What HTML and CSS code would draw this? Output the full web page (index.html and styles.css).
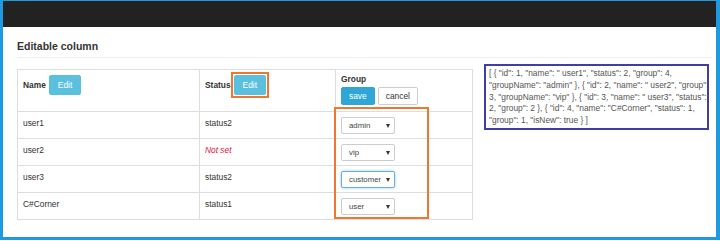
FILE: index.html
```html
<!DOCTYPE html>
<html>
<head>
<meta charset="utf-8">
<link rel="stylesheet" href="styles.css">
</head>
<body>
<div class="frame">
  <div class="navbar"></div>
  <div class="container">
    <h4 class="page-title">Editable column</h4>
    <div class="content-row">
      <div class="table-wrap">
        <table class="grid">
          <colgroup>
            <col class="c-name">
            <col class="c-status">
            <col class="c-group">
          </colgroup>
          <thead>
            <tr>
              <th class="th-top"><div class="th-inline"><span>Name</span><button class="btn btn-info">Edit</button></div></th>
              <th class="th-top"><div class="th-inline"><span>Status</span><span class="mark"><button class="btn btn-info">Edit</button></span></div></th>
              <th class="th-group">
                <div class="group-label">Group</div>
                <div class="btns"><button class="btn btn-save">save</button><button class="btn btn-cancel">cancel</button></div>
              </th>
            </tr>
          </thead>
          <tbody>
            <tr>
              <td>user1</td>
              <td>status2</td>
              <td><div class="select"><span>admin</span><span class="caret"></span></div></td>
            </tr>
            <tr>
              <td>user2</td>
              <td><span class="empty">Not set</span></td>
              <td><div class="select"><span>vip</span><span class="caret"></span></div></td>
            </tr>
            <tr>
              <td>user3</td>
              <td>status2</td>
              <td><div class="select focused"><span>customer</span><span class="caret"></span></div></td>
            </tr>
            <tr>
              <td>C#Corner</td>
              <td>status1</td>
              <td><div class="select"><span>user</span><span class="caret"></span></div></td>
            </tr>
          </tbody>
        </table>
        <div class="group-mark"></div>
      </div>
      <div class="json-box">[ { "id": 1, "name": " user1", "status": 2, "group": 4,<br>"groupName": "admin" }, { "id": 2, "name": " user2", "group":<br>3, "groupName": "vip" }, { "id": 3, "name": " user3", "status":<br>2, "group": 2 }, { "id": 4, "name": "C#Corner", "status": 1,<br>"group": 1, "isNew": true } ]</div>
    </div>
  </div>
</div>
</body>
</html>
```

FILE: styles.css
```css
* { box-sizing: border-box; }

html, body {
  margin: 0;
  padding: 0;
  background: #fff;
}

body {
  font-family: "Liberation Sans", Arial, Helvetica, sans-serif;
  font-size: 8.4px;
  line-height: 12px;
  color: #333;
}

.frame {
  width: 720px;
  height: 240px;
  border-top: 1px solid #1d9ae0;
  border-left: 3px solid #1d9ae0;
  border-right: 4px solid #1d9ae0;
  border-bottom: 3px solid #1d9ae0;
  background: #fff;
  overflow: hidden;
}

.navbar {
  height: 26px;
  background: #222;
}

.container {
  padding: 0 4px 0 14px;
}

.page-title {
  margin: 13px 0 0;
  padding-bottom: 5px;
  font-size: 10.5px;
  line-height: 12px;
  font-weight: bold;
  color: #333;
  border-bottom: 1px solid #eee;
}

.content-row {
  display: flex;
  align-items: flex-start;
  gap: 12px;
  margin-top: 6px;
}

.table-wrap {
  position: relative;
  width: 455px;
  margin-top: 5px;
}

.grid {
  width: 455px;
  table-layout: fixed;
  border-collapse: collapse;
  border: 1px solid #ddd;
}

.c-name { width: 182px; }
.c-status { width: 136px; }
.c-group { width: 137px; }

.grid th,
.grid td {
  border: 1px solid #ddd;
  text-align: left;
  vertical-align: top;
}

.grid th {
  font-weight: bold;
  padding: 5px 5px 0;
}

.grid th.th-group {
  font-weight: normal;
  padding: 3px 5px 6px;
}

.group-label {
  font-weight: bold;
  line-height: 12px;
}

.th-inline {
  display: flex;
  align-items: center;
  gap: 3px;
}

.mark {
  display: flex;
  margin: -3px 0 -3px -3px;
  padding: 1px;
  border: 2px solid #f0782e;
}

.btns {
  display: flex;
  gap: 3px;
  margin-top: 2px;
}

.btn {
  font-family: inherit;
  font-size: 8.4px;
  border: 1px solid transparent;
  border-radius: 2px;
  padding: 0 7px;
  margin: 0;
  cursor: pointer;
}

.btn-info {
  height: 20px;
  padding: 0 8px;
  background: #5bc0de;
  border-color: #5bc0de;
  color: #fff;
}

.btn-save {
  height: 18px;
  background: #2fa6d6;
  border-color: #2fa6d6;
  color: #fff;
}

.btn-cancel {
  height: 18px;
  background: #fff;
  border-color: #ccc;
  color: #333;
}

.grid td {
  padding: 5px 5px 4px;
  height: 27px;
}

.empty {
  color: #dd1144;
  font-style: italic;
}

.select {
  display: flex;
  align-items: center;
  justify-content: space-between;
  width: 54px;
  height: 17px;
  padding: 0 4px 0 7px;
  border: 1px solid #ccc;
  border-radius: 2px;
  background: #fff;
  font-size: 7.8px;
  color: #444;
}

.select.focused {
  border-color: #66afe9;
  box-shadow: 0 0 3px rgba(102, 175, 233, 0.7);
}

.caret {
  width: 0;
  height: 0;
  border-left: 2.5px solid transparent;
  border-right: 2.5px solid transparent;
  border-top: 4px solid #333;
}

.group-mark {
  position: absolute;
  left: 317px;
  top: 38px;
  width: 95px;
  height: 112px;
  border: 2px solid #f0782e;
  pointer-events: none;
}

.json-box {
  width: 225px;
  height: 66px;
  border: 2px solid #3e3ea6;
  padding: 2px 3px 1px;
  font-size: 8.4px;
  line-height: 11.8px;
  color: #555;
  white-space: nowrap;
  overflow: hidden;
}
```
